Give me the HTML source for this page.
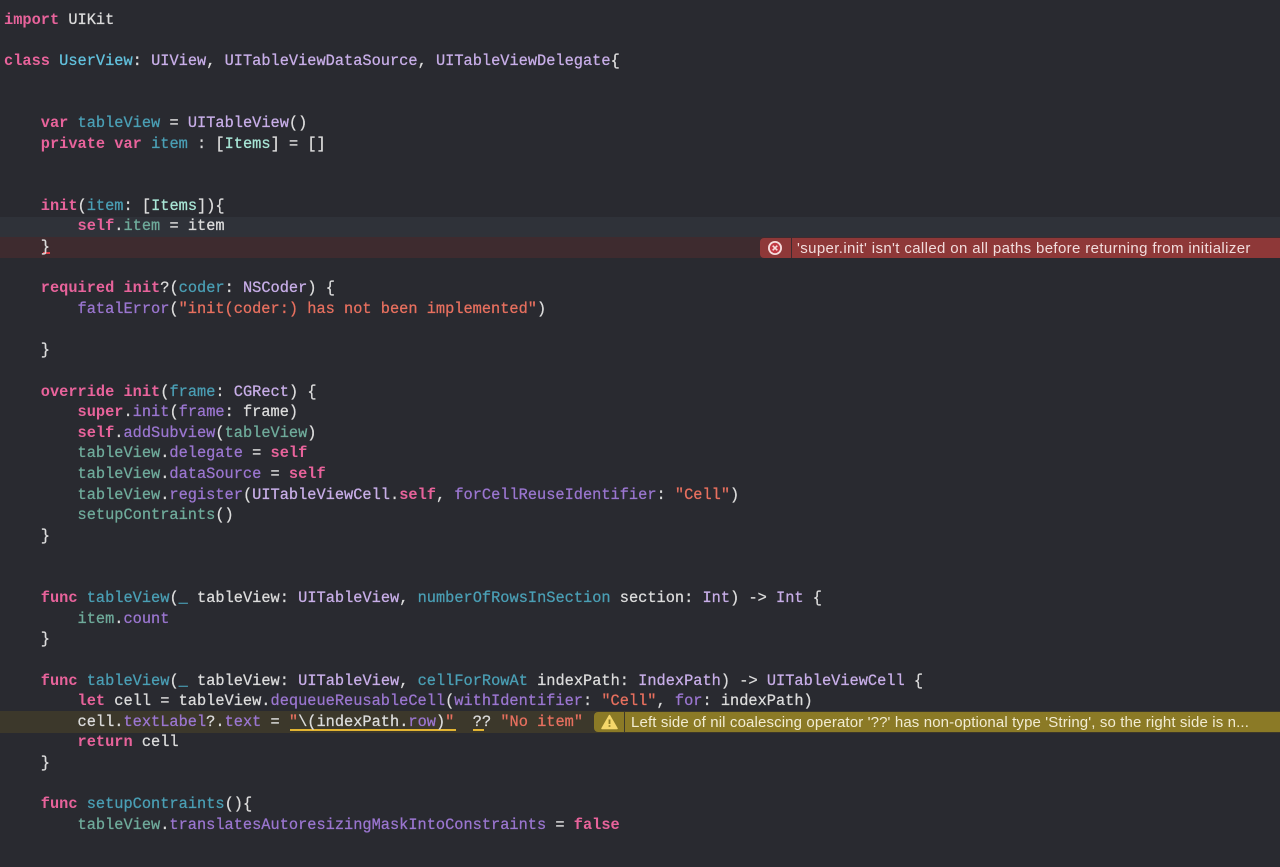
<!DOCTYPE html>
<html><head><meta charset="utf-8">
<style>
html,body{margin:0;padding:0;width:1280px;height:867px;overflow:hidden;background:#292a30}
.hl{position:absolute;left:0;width:1280px}
pre{position:absolute;left:4px;top:10px;margin:0;font:15.32px/20.64px "Liberation Mono",monospace;color:#dcdcdc;font-weight:400;-webkit-text-stroke:.25px;filter:blur(.35px)}
b{font-weight:700;color:#e8639b;-webkit-text-stroke:0}
.t{color:#c8aee8}.m{color:#9b76d0}.p{color:#6fab9b}.d{color:#4a9fb5}.n{color:#62c2de}.i{color:#a8e6d6}.s{color:#e8705f}
.bar{position:absolute;font-family:"Liberation Sans",sans-serif;font-size:15px;line-height:21px;white-space:nowrap;overflow:hidden;filter:blur(.25px)}
.u{position:absolute;height:2px;background:#e2b432}
</style></head><body>
<div class="hl" style="top:217px;height:20px;background:#2f3239"></div>
<div class="hl" style="top:237px;height:21px;background:#3e2b2f"></div>
<div class="hl" style="top:711px;height:22px;background:#3c382b"></div>
<div class="bar" style="left:760px;top:238px;width:31px;height:20px;background:#8e3838;border-radius:4px 0 0 4px"></div>
<div class="bar" style="left:792px;top:238px;width:488px;height:20px;background:#8e3838;color:#f1dcdc;padding-left:5px;box-sizing:border-box;letter-spacing:.37px">'super.init' isn't called on all paths before returning from initializer</div>
<svg style="position:absolute;left:767px;top:240px" width="16" height="16" viewBox="0 0 16 16"><circle cx="8" cy="8" r="7" fill="#f6dcdc"/><circle cx="8" cy="8" r="5.2" fill="#c23a44"/><path d="M5.7 5.7L10.3 10.3M10.3 5.7L5.7 10.3" stroke="#f6dcdc" stroke-width="1.6"/></svg>
<div class="bar" style="left:594px;top:712px;width:30px;height:20px;background:#8b7a26;border-radius:4px 0 0 4px"></div>
<div class="bar" style="left:625px;top:712px;width:655px;height:20px;background:#8b7a26;color:#f2ecd2;padding-left:6px;box-sizing:border-box;letter-spacing:.13px">Left side of nil coalescing operator '??' has non-optional type 'String', so the right side is n...</div>
<svg style="position:absolute;left:601px;top:714px" width="17" height="16" viewBox="0 0 17 16"><path d="M8.5 1.5L16 14.5H1Z" fill="#f5d76a" stroke="#f5d76a" stroke-linejoin="round" stroke-width="1.5"/><path d="M8.5 5.5V10M8.5 11.2V12.8" stroke="#8b7a26" stroke-width="1.8"/></svg>
<div class="u" style="left:290px;top:729px;width:166px"></div>
<div class="u" style="left:473px;top:729px;width:11px"></div>
<div class="u" style="left:43px;top:252px;width:7px;height:1.5px;background:#e0404a"></div>
<pre><b>import</b> UIKit

<b>class</b> <span class="n">UserView</span>: <span class="t">UIView</span>, <span class="t">UITableViewDataSource</span>, <span class="t">UITableViewDelegate</span>{


    <b>var</b> <span class="d">tableView</span> = <span class="t">UITableView</span>()
    <b>private</b> <b>var</b> <span class="d">item</span> : [<span class="i">Items</span>] = []


    <b>init</b>(<span class="d">item</span>: [<span class="i">Items</span>]){
        <b>self</b>.<span class="p">item</span> = item
    }

    <b>required</b> <b>init</b>?(<span class="d">coder</span>: <span class="t">NSCoder</span>) {
        <span class="m">fatalError</span>(<span class="s">"init(coder:) has not been implemented"</span>)

    }

    <b>override</b> <b>init</b>(<span class="d">frame</span>: <span class="t">CGRect</span>) {
        <b>super</b>.<span class="m">init</span>(<span class="m">frame</span>: frame)
        <b>self</b>.<span class="m">addSubview</span>(<span class="p">tableView</span>)
        <span class="p">tableView</span>.<span class="m">delegate</span> = <b>self</b>
        <span class="p">tableView</span>.<span class="m">dataSource</span> = <b>self</b>
        <span class="p">tableView</span>.<span class="m">register</span>(<span class="t">UITableViewCell</span>.<b>self</b>, <span class="m">forCellReuseIdentifier</span>: <span class="s">"Cell"</span>)
        <span class="p">setupContraints</span>()
    }


    <b>func</b> <span class="d">tableView</span>(<span class="d">_</span> tableView: <span class="t">UITableView</span>, <span class="d">numberOfRowsInSection</span> section: <span class="t">Int</span>) -&gt; <span class="t">Int</span> {
        <span class="p">item</span>.<span class="m">count</span>
    }

    <b>func</b> <span class="d">tableView</span>(<span class="d">_</span> tableView: <span class="t">UITableView</span>, <span class="d">cellForRowAt</span> indexPath: <span class="t">IndexPath</span>) -&gt; <span class="t">UITableViewCell</span> {
        <b>let</b> cell = tableView.<span class="m">dequeueReusableCell</span>(<span class="m">withIdentifier</span>: <span class="s">"Cell"</span>, <span class="m">for</span>: indexPath)
        cell.<span class="m">textLabel</span>?.<span class="m">text</span> = <span class="s">"</span>\(indexPath.<span class="m">row</span>)<span class="s">"</span>  ?? <span class="s">"No item"</span>
        <b>return</b> cell
    }

    <b>func</b> <span class="d">setupContraints</span>(){
        <span class="p">tableView</span>.<span class="m">translatesAutoresizingMaskIntoConstraints</span> = <b>false</b>
</pre>
</body></html>
